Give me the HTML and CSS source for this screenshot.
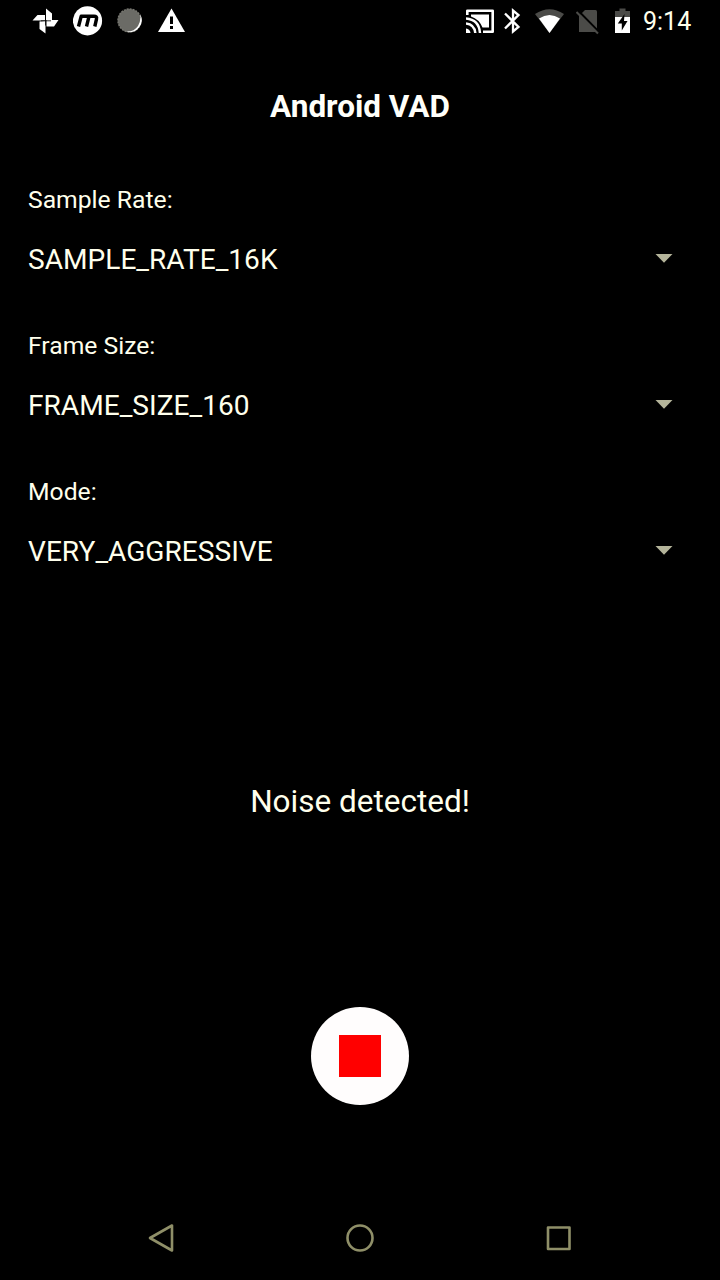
FILE: index.html
```html
<!DOCTYPE html>
<html lang="en">
<head>
<meta charset="utf-8">
<title>Android VAD</title>
<link rel="stylesheet" href="styles.css">
</head>
<body>
<div class="screen">
  <header class="status">
    <div class="notifications">
      <svg width="28" height="32" viewBox="32 5 28 32"><path d="M46 20V8.500L52 13.500V20ZM46.500 21V20H58.500L54 26.500H46.500ZM45.500 21V33.500L39.500 29V21.500ZM45 20.500H32.500L37.500 15H45Z" fill="#fff"/><path d="M45.500 16V25.500M41 20.800H51" stroke="#000" stroke-width=".8"/></svg>
      <svg width="30" height="32" viewBox="73 5 30 32"><circle cx="87.500" cy="20.800" r="14.600" fill="#fff"/><path d="M78.500 26.500 81.200 16.300H94Q97.300 16.300 96.500 19L94.800 26.500M86.500 26.500 89 16.500" fill="none" stroke="#000" stroke-width="3.400" stroke-linejoin="round"/></svg>
      <svg width="26" height="32" viewBox="117 5 26 32"><circle cx="129.500" cy="20.500" r="11.500" fill="#6b6b66" stroke="#777770" stroke-width="1.500" stroke-dasharray="2 1"/><path d="M140 14A12 12 0 0 1 126 31.500Q134 32 138 26 141.500 20 140 14Z" fill="#fff"/></svg>
      <svg width="28" height="32" viewBox="158 5 28 32"><path d="M171.500 8.500 185 32H158Z" fill="#fff"/><path d="M171.500 16.500V24M171.500 26V29" stroke="#000" stroke-width="3"/></svg>
    </div>
    <div class="system">
      <svg width="29" height="32" viewBox="466 5 29 32"><path d="M467.300 15V10.800H492.700V31.700H483" fill="none" stroke="#fff" stroke-width="2.600" stroke-linejoin="round"/><path d="M471 14.500H489V27.500H482.500Q479 19 471 16.500Z" fill="#fff"/><path d="M466 18.500Q479 19.500 480 33M466 23.500Q474.500 24.500 475.300 33" fill="none" stroke="#fff" stroke-width="2.500"/><path d="M466 28.500Q470 29 470.500 33H466Z" fill="#fff"/></svg>
      <svg width="17" height="32" viewBox="504 5 17 32"><path d="M505 13.500 518.500 27 513 31.500V10.500L518.500 15 505 28.500" fill="none" stroke="#fff" stroke-width="2.300"/></svg>
      <svg width="30" height="32" viewBox="535 5 30 32"><path d="M535 14Q549.500 4.500 564 14L549.500 33Z" fill="#4b4b48"/><path d="M539 18.500Q549.500 11.500 560 18.500L549.500 33Z" fill="#fff"/></svg>
      <svg width="24" height="32" viewBox="576 5 24 32"><path d="M585 10H595.500Q597 10 597 11.500V32H579V16Z" fill="#4b4b48"/><path d="M578 10.500 599 32" stroke="#000" stroke-width="2.200"/><path d="M576.500 12 598 33.500" stroke="#4b4b48" stroke-width="2"/></svg>
      <svg width="16" height="32" viewBox="615 5 16 32"><path d="M615 17V11H619.500V8.500H625.500V11H630V17Z" fill="#4b4b48"/><path d="M615 17H630V33H615Z" fill="#fff"/><path d="M624.500 14 617.800 23.500H621.800V30.500L627.500 21H624Z" fill="#000"/></svg>
      <span class="clock">9:14</span>
    </div>
  </header>
  <h1 class="title">Android VAD</h1>
  <main class="settings">
    <section class="field">
      <div class="label">Sample Rate:</div>
      <div class="spinner"><span class="value">SAMPLE_RATE_16K</span><svg class="arrow" width="18" height="9" viewBox="0 0 18 9"><path d="M.5 0H17.500L9 8.700Z"/></svg></div>
    </section>
    <section class="field">
      <div class="label">Frame Size:</div>
      <div class="spinner"><span class="value">FRAME_SIZE_160</span><svg class="arrow" width="18" height="9" viewBox="0 0 18 9"><path d="M.5 0H17.500L9 8.700Z"/></svg></div>
    </section>
    <section class="field">
      <div class="label">Mode:</div>
      <div class="spinner"><span class="value">VERY_AGGRESSIVE</span><svg class="arrow" width="18" height="9" viewBox="0 0 18 9"><path d="M.5 0H17.500L9 8.700Z"/></svg></div>
    </section>
  </main>
  <p class="result">Noise detected!</p>
  <button class="record" aria-label="Stop"><span class="stop"></span></button>
  <nav class="navbar">
    <svg width="26" height="30" viewBox="148 1223 26 30"><path d="M172 1225.500V1250.500L150 1238Z"/></svg>
    <svg width="28" height="30" viewBox="346 1223 28 30"><circle cx="360" cy="1238" r="12.500"/></svg>
    <svg width="25" height="30" viewBox="546 1223 25 30"><rect x="548" y="1227.500" width="21.500" height="21.500"/></svg>
  </nav>
</div>
</body>
</html>
```
FILE: styles.css
```css
body { margin: 0; background: #000; }
.screen {
  box-sizing: border-box;
  width: 720px;
  height: 1280px;
  display: flex;
  flex-direction: column;
  background: #000;
  color: #ffffec;
  font-family: Roboto, sans-serif;
  overflow: hidden;
}
svg { display: block; flex: none; }
.status {
  height: 42px;
  padding: 0 28px 0 32px;
  display: flex;
  justify-content: space-between;
  align-items: center;
}
.notifications { display: flex; }
.notifications svg:nth-child(1) { margin-right: 13px; }
.notifications svg:nth-child(2) { margin-right: 14px; }
.notifications svg:nth-child(3) { margin-right: 15px; }
.system { display: flex; align-items: center; }
.system svg:nth-child(1) { margin-right: 9px; }
.system svg:nth-child(2) { margin-right: 14px; }
.system svg:nth-child(3) { margin-right: 11px; }
.system svg:nth-child(4) { margin-right: 15px; }
.system svg:nth-child(5) { margin-right: 12px; }
.clock { width: 49px; font-size: 25px; line-height: 28px; padding-top: 2px; white-space: nowrap; }
.title {
  margin: 46px 0 0;
  text-align: center;
  font-size: 31.5px;
  line-height: 37px;
  font-weight: 700;
  color: #fffffa;
}
.settings { margin-top: 60px; padding: 0 28px; }
.field { height: 146px; }
.label { font-size: 24.7px; line-height: 29px; }
.spinner {
  margin-top: 27px;
  padding-right: 19px;
  height: 34px;
  display: flex;
  align-items: center;
  justify-content: space-between;
}
.value { font-size: 28.1px; line-height: 34px; padding-top: 4px; }
.arrow { fill: #b4b49a; }
.result { margin: 160px 0 0; text-align: center; font-size: 31.5px; line-height: 37px; }
.record {
  align-self: center;
  width: 98px;
  height: 98px;
  margin: 187px 0 0;
  padding: 0;
  border: 0;
  border-radius: 50%;
  background: #fffdfd;
  display: flex;
  align-items: center;
  justify-content: center;
}
.stop { width: 42px; height: 42px; background: #f00; }
.navbar {
  margin-top: auto;
  height: 84px;
  padding: 0 149px 0 148px;
  display: flex;
  align-items: center;
  justify-content: space-between;
}
.navbar svg { fill: none; stroke: #8f8f68; stroke-width: 2.6; stroke-linejoin: round; }
```
